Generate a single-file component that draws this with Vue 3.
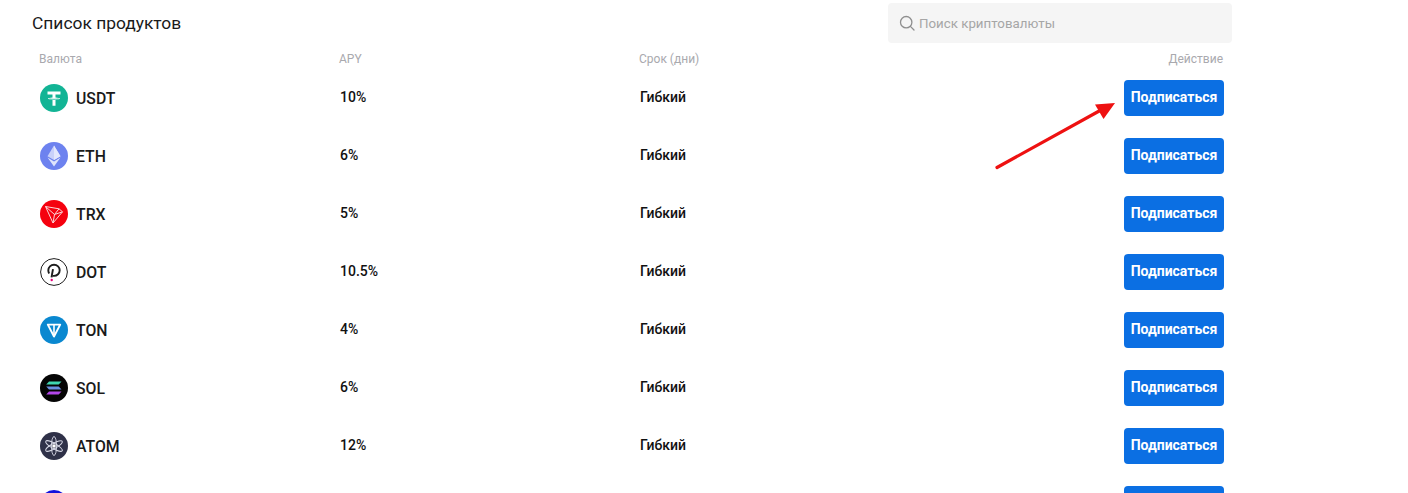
<template>
  <div class="page">
    <div class="top">
      <h2 class="title">Список продуктов</h2>
      <div class="search">
        <svg class="search-icon" viewBox="0 0 16 16" width="16" height="16">
          <circle cx="7.2" cy="7.2" r="5.7" fill="none" stroke="#8f8f8f" stroke-width="1.3" />
          <path d="M11.4 11.4 15 15" stroke="#8f8f8f" stroke-width="1.3" stroke-linecap="round" />
        </svg>
        <span>Поиск криптовалюты</span>
      </div>
    </div>

    <div class="table">
      <div class="row head">
        <span>Валюта</span>
        <span>APY</span>
        <span>Срок (дни)</span>
        <span class="right">Действие</span>
      </div>

      <div v-for="p in products" :key="p.name" class="row item">
        <div class="coin">
          <svg class="coin-icon" viewBox="0 0 28 28" width="28" height="28">
            <template v-if="p.name === 'USDT'">
              <circle cx="14" cy="14" r="14" fill="#12b495" />
              <path d="M7.500 7.600h13v2.800h-5v3c2.400.1 4.600.6 4.600 1.200s-2.200 1.100-4.600 1.200v6h-3v-6c-2.400-.1-4.600-.6-4.600-1.200s2.200-1.100 4.600-1.200v-3h-5z" fill="#fff" />
              <path d="M9.500 14.700c1 .4 2.700.6 4.500.6s3.500-.2 4.500-.6" fill="none" stroke="#12b495" stroke-width=".8" />
            </template>
            <template v-else-if="p.name === 'ETH'">
              <circle cx="14" cy="14" r="14" fill="#6d82ef" />
              <path d="M14 3.500 7.500 14.200 14 18l6.500-3.800z" fill="#c9d1fa" />
              <path d="M14 3.500v14.500l6.500-3.800z" fill="#e3e7fd" />
              <path d="M7.500 15.600 14 24.500l6.500-8.900L14 19.400z" fill="#dfe4fc" />
            </template>
            <template v-else-if="p.name === 'TRX'">
              <circle cx="14" cy="14" r="14" fill="#f5010f" />
              <path d="M5.500 6.500 19 8.800l3.500 3L13 23zM5.500 6.500l9 8L13 23M14.500 14.500l8-2.700M14.500 14.500 19 8.800" fill="none" stroke="#fbd5d7" stroke-width="1" stroke-linejoin="round" />
            </template>
            <template v-else-if="p.name === 'DOT'">
              <circle cx="14" cy="14" r="13.400" fill="#fff" stroke="#1d1d1d" stroke-width="1" />
              <path d="M9.200 15.500c-.6-1-.9-2-.9-3.200 0-3.100 2.500-5.600 5.700-5.600s5.700 2.500 5.700 5.600-2.500 5.600-5.700 5.600c-.6 0-1.100-.1-1.600-.2" fill="none" stroke="#1d1d1d" stroke-width="1.900" />
              <path d="M13 11.200 11.500 19.300" stroke="#1d1d1d" stroke-width="1.900" />
              <circle cx="11.700" cy="22" r="1.200" fill="#e6007a" />
            </template>
            <template v-else-if="p.name === 'TON'">
              <circle cx="14" cy="14" r="14" fill="#0a88d0" />
              <path d="M7.800 8.600h12.400L14 20.500z" fill="none" stroke="#fff" stroke-width="1.900" stroke-linejoin="round" />
              <path d="M14 8.600v11.900" stroke="#fff" stroke-width="1.600" />
            </template>
            <template v-else-if="p.name === 'SOL'">
              <circle cx="14" cy="14" r="14" fill="#050505" />
              <path d="M9 7.500h12.500l-2.800 3H6.200z" fill="#3fd6b0" />
              <path d="M6.200 12.500h12.500l2.800 3H9z" fill="#6a8fe0" />
              <path d="M9 17.500h12.500l-2.800 3H6.200z" fill="#b346ea" />
            </template>
            <template v-else>
              <circle cx="14" cy="14" r="14" fill="#2f3148" />
              <g fill="none" stroke="#d8d9e6" stroke-width=".9">
                <ellipse cx="14" cy="14" rx="2.600" ry="9.500" />
                <ellipse cx="14" cy="14" rx="2.600" ry="9.500" transform="rotate(60 14 14)" />
                <ellipse cx="14" cy="14" rx="2.600" ry="9.500" transform="rotate(120 14 14)" />
              </g>
              <circle cx="14" cy="14" r="1.800" fill="#fff" />
            </template>
          </svg>
          <span class="coin-name">{{ p.name }}</span>
        </div>
        <span class="cell">{{ p.apy }}</span>
        <span class="cell">Гибкий</span>
        <div class="right">
          <button class="sub-btn">Подписаться</button>
        </div>
      </div>

      <!-- обрезанная строка снизу -->
      <div class="row item">
        <div class="coin">
          <svg class="coin-icon" viewBox="0 0 28 28" width="28" height="28">
            <circle cx="14" cy="14" r="14" fill="#1111dd" />
          </svg>
        </div>
        <span></span>
        <span></span>
        <div class="right">
          <button class="sub-btn"></button>
        </div>
      </div>
    </div>

    <svg class="arrow" width="130" height="72" viewBox="0 0 130 72">
      <path d="M3 67.500 107 10" stroke="#ee1111" stroke-width="3.200" stroke-linecap="round" />
      <path d="M121 3 101 4.500 109.500 19z" fill="#ee1111" />
    </svg>
  </div>
</template>

<script setup>
const products = [
  { name: 'USDT', apy: '10%' },
  { name: 'ETH', apy: '6%' },
  { name: 'TRX', apy: '5%' },
  { name: 'DOT', apy: '10.5%' },
  { name: 'TON', apy: '4%' },
  { name: 'SOL', apy: '6%' },
  { name: 'ATOM', apy: '12%' }
]
</script>

<style>
html, body {
  margin: 0;
  background: #fff;
  overflow: hidden;
}
</style>

<style scoped>
.page {
  position: relative;
  height: 493px;
  overflow: hidden;
  font-family: Roboto, "Noto Sans", sans-serif;
  color: #111;
}

.top {
  width: 1232px;
  padding: 3px 0 0 32px;
  box-sizing: border-box;
  display: flex;
  justify-content: space-between;
  align-items: center;
}

.title {
  margin: 0;
  font-size: 17.4px;
  font-weight: 400;
  color: #1a1a1a;
}

.search {
  width: 344px;
  height: 40px;
  box-sizing: border-box;
  padding-left: 11px;
  background: #f5f5f5;
  border-radius: 4px;
  display: flex;
  align-items: center;
  gap: 4px;
  font-size: 13.3px;
  color: #a6a6a6;
}

.table {
  width: 1224px;
}

.row {
  display: grid;
  grid-template-columns: 340px 300px 1fr 200px;
  align-items: center;
}

.head {
  height: 20px;
  margin: 6px 1px 0 -1px;
  font-size: 12px;
  color: #a9a9ae;
}

.head > span:first-child,
.coin {
  margin-left: 40px;
}

.item {
  height: 58px;
}

.coin {
  display: flex;
  align-items: center;
  gap: 8px;
}

.coin-icon {
  display: block;
  flex: none;
}

.coin-name {
  font-size: 15.8px;
  font-weight: 500;
  color: #1a1a1a;
}

.cell {
  margin-bottom: 2px;
  font-size: 14px;
  font-weight: 500;
  color: #111;
}

.right {
  display: flex;
  justify-content: flex-end;
}

.sub-btn {
  width: 100px;
  height: 36px;
  padding: 0 0 2px;
  border: 0;
  border-radius: 4px;
  background: #0b6fe3;
  color: #fff;
  font-family: inherit;
  font-size: 14px;
  font-weight: 700;
  cursor: pointer;
}

.arrow {
  position: absolute;
  left: 994px;
  top: 100px;
}
</style>
